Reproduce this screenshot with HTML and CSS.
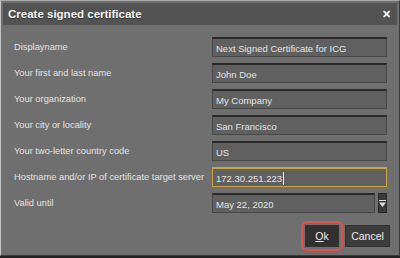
FILE: index.html
```html
<!DOCTYPE html>
<html lang="en">
<head>
    <meta charset="UTF-8">
    <title>Create signed certificate</title>
    <link rel="stylesheet" href="styles.css">
</head>
<body>
    <div class="dialog">
        <div class="titlebar">
            <span class="title">Create signed certificate</span>
            <span class="close">&#x2715;</span>
        </div>

        <div class="form">
            <div class="row">
                <label>Displayname</label>
                <div class="field">Next Signed Certificate for ICG</div>
            </div>
            <div class="row">
                <label>Your first and last name</label>
                <div class="field">John Doe</div>
            </div>
            <div class="row">
                <label>Your organization</label>
                <div class="field">My Company</div>
            </div>
            <div class="row">
                <label>Your city or locality</label>
                <div class="field">San Francisco</div>
            </div>
            <div class="row">
                <label>Your two-letter country code</label>
                <div class="field">US</div>
            </div>
            <div class="row">
                <label>Hostname and/or IP of certificate target server</label>
                <div class="field focused">172.30.251.223<span class="caret"></span></div>
            </div>
            <div class="row">
                <label>Valid until</label>
                <div class="date">
                    <div class="field">May 22, 2020</div>
                    <div class="drop">
                        <svg width="7" height="9" viewBox="0 0 7 9">
                            <rect x="0" y="1" width="7" height="1" fill="#ddd"/>
                            <path d="M0 3.5 L7 3.5 L3.5 8 Z" fill="#ddd"/>
                        </svg>
                    </div>
                </div>
            </div>
        </div>

        <div class="actions">
            <span class="highlight">
                <button class="btn ok"><u>O</u>k</button>
            </span>
            <button class="btn cancel">Cancel</button>
        </div>
    </div>
</body>
</html>
```

FILE: styles.css
```css
body {
    margin: 0;
    background-color: #232323;
    font-family: 'Liberation Sans', Arial, sans-serif;
    font-size: 9.5px;
    color: #e2e2e2;
}
.dialog {
    box-sizing: border-box;
    width: 400px;
    height: 256px;
    padding: 2px;
    background-color: #6f6f6f;
    border: 1px solid #3c3c3c;
    border-top-color: #a8a8a8;
    border-left-color: #c4c4c4;
    display: flex;
    flex-direction: column;
}
.titlebar {
    height: 22px;
    background-color: #535353;
    display: flex;
    align-items: center;
    justify-content: space-between;
    padding: 0 6px 0 5px;
}
.title {
    font-size: 11.5px;
    font-weight: bold;
    color: #f4f4f4;
    text-shadow: 0 1px 1px #333;
}
.close {
    font-size: 11px;
    font-weight: bold;
    color: #f4f4f4;
}
.form {
    padding: 12px 10px 0 11px;
    display: flex;
    flex-direction: column;
    gap: 6px;
}
.row {
    display: flex;
    align-items: center;
    justify-content: space-between;
    height: 20px;
}
label {
    white-space: nowrap;
    font-size: 9.3px;
}
.field {
    box-sizing: border-box;
    width: 175px;
    height: 20px;
    padding: 1px 3px 0;
    background-color: #606060;
    border: 1px solid #474747;
    border-top: 2px solid #2a2a2a;
    display: flex;
    align-items: center;
    color: #e4e4e4;
    white-space: nowrap;
}
.field.focused {
    border: 1px solid #c9a245;
    border-top: 2px solid #c9a245;
}
.caret {
    width: 1px;
    height: 13px;
    background-color: #f0f0f0;
    margin-left: 1px;
}
.date {
    display: flex;
    gap: 3px;
}
.date .field {
    width: 163px;
}
.drop {
    box-sizing: border-box;
    width: 9px;
    height: 20px;
    background-color: #3a3a3a;
    border: 1px solid #2a2a2a;
    display: flex;
    align-items: center;
    justify-content: center;
}
.actions {
    margin-top: auto;
    margin-bottom: 2px;
    padding-right: 7px;
    display: flex;
    justify-content: flex-end;
    align-items: center;
    gap: 2px;
}
.highlight {
    display: flex;
    padding: 2px;
    border: 2px solid #e8504a;
    border-radius: 6px;
}
.btn {
    height: 22px;
    padding: 0;
    font-family: 'Liberation Sans', Arial, sans-serif;
    font-size: 10.5px;
    color: #ececec;
    background-color: #3d3d3d;
    border: 1px solid #333;
}
.ok {
    width: 34px;
    background-color: #313131;
}
.cancel {
    width: 45px;
}
```
